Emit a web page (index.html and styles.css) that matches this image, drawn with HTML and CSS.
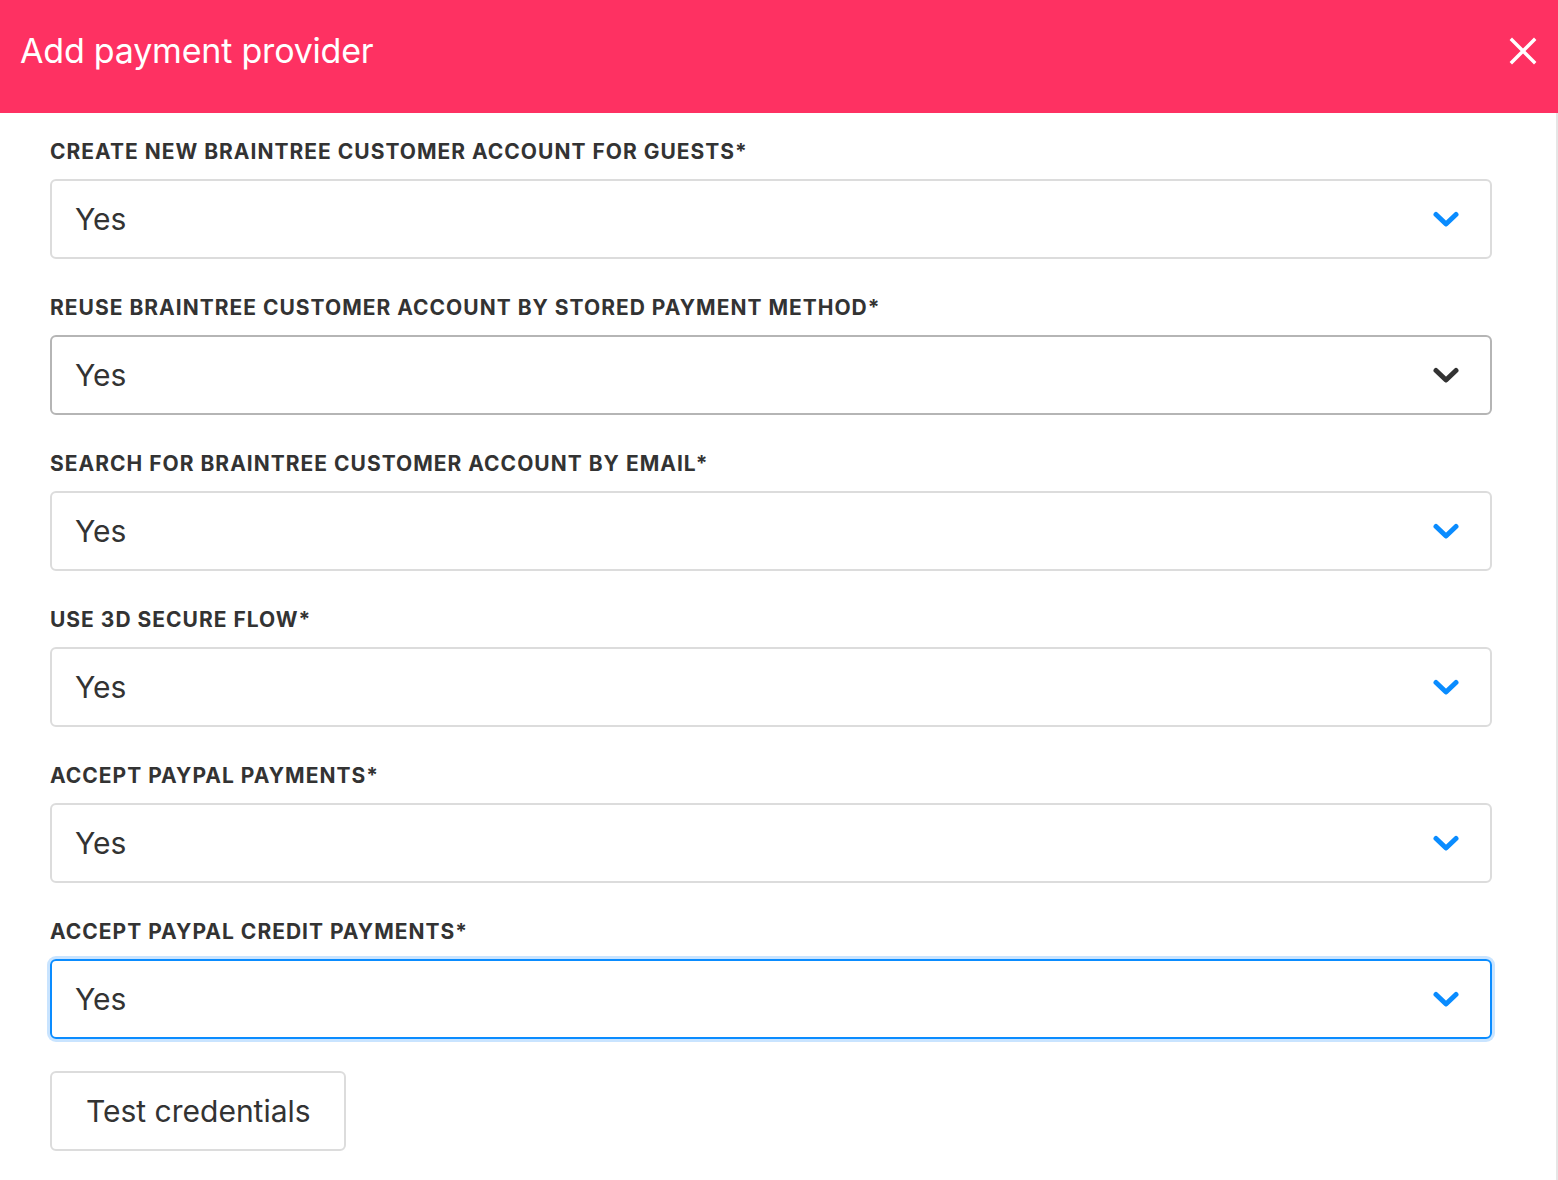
FILE: index.html
```html
<!DOCTYPE html>
<html lang="en">
<head>
  <meta charset="UTF-8">
  <title>Add payment provider</title>
  <link rel="stylesheet" href="styles.css">
</head>
<body>
  <div class="header">
    <span class="title">Add payment provider</span>
    <button class="close" aria-label="Close">
      <svg width="28" height="28" viewBox="0 0 28 28"><path d="M3 3 L25 25 M25 3 L3 25" stroke="#fff" stroke-width="3.4" stroke-linecap="square"/></svg>
    </button>
  </div>
  <div class="panel">
    <form class="provider-form">
      <div class="field">
        <label>Create new Braintree customer account for guests*</label>
        <div class="select">
          <span>Yes</span>
          <svg class="chevron" width="26" height="16" viewBox="0 0 26 16"><path d="M3 3.5 L13 13 L23 3.5"/></svg>
        </div>
      </div>
      <div class="field">
        <label>Reuse Braintree customer account by stored payment method*</label>
        <div class="select hover">
          <span>Yes</span>
          <svg class="chevron" width="26" height="16" viewBox="0 0 26 16"><path d="M3 3.5 L13 13 L23 3.5"/></svg>
        </div>
      </div>
      <div class="field">
        <label>Search for Braintree customer account by email*</label>
        <div class="select">
          <span>Yes</span>
          <svg class="chevron" width="26" height="16" viewBox="0 0 26 16"><path d="M3 3.5 L13 13 L23 3.5"/></svg>
        </div>
      </div>
      <div class="field">
        <label>Use 3D secure flow*</label>
        <div class="select">
          <span>Yes</span>
          <svg class="chevron" width="26" height="16" viewBox="0 0 26 16"><path d="M3 3.5 L13 13 L23 3.5"/></svg>
        </div>
      </div>
      <div class="field">
        <label>Accept PayPal payments*</label>
        <div class="select">
          <span>Yes</span>
          <svg class="chevron" width="26" height="16" viewBox="0 0 26 16"><path d="M3 3.5 L13 13 L23 3.5"/></svg>
        </div>
      </div>
      <div class="field">
        <label>Accept PayPal credit payments*</label>
        <div class="select focus">
          <span>Yes</span>
          <svg class="chevron" width="26" height="16" viewBox="0 0 26 16"><path d="M3 3.5 L13 13 L23 3.5"/></svg>
        </div>
      </div>
      <button type="button" class="test-btn">Test credentials</button>
    </form>
  </div>
</body>
</html>
```

FILE: styles.css
```css
html, body {
  margin: 0;
  background: #fff;
}
body {
  font-family: Inter, 'Noto Sans', sans-serif;
  color: #333;
}
.header {
  background: #fe3162;
  height: 113px;
  display: flex;
  align-items: center;
  justify-content: space-between;
  padding: 0 20px;
}
.title {
  color: #fff;
  font-size: 34px;
  font-weight: 400;
  letter-spacing: -0.2px;
  margin-top: -12px;
}
.close {
  background: none;
  border: none;
  padding: 0;
  width: 28px;
  height: 28px;
  margin-top: -12px;
  margin-right: 1px;
  cursor: pointer;
}
.panel {
  border-right: 2px solid #e6e6e6;
  min-height: 1067px;
}
.provider-form {
  padding: 27px 64px 0 50px;
}
.field { margin-bottom: 37px; }
.field:last-of-type { margin-bottom: 32px; }
label {
  display: block;
  font-size: 21px;
  line-height: 24px;
  font-weight: 700;
  text-transform: uppercase;
  letter-spacing: 1px;
  color: #333;
  margin-bottom: 15px;
}
.select {
  box-sizing: border-box;
  height: 80px;
  border: 2px solid #dcdcdc;
  border-radius: 6px;
  display: flex;
  align-items: center;
  justify-content: space-between;
  padding: 0 31px 0 23px;
  font-size: 30px;
  color: #333;
}
.select.hover { border-color: #b5b5b5; }
.select.focus {
  border-color: #0a8cff;
  box-shadow: 0 0 0 3px #c9e4ff;
}
.chevron path {
  fill: none;
  stroke: #0a8cff;
  stroke-width: 5;
  stroke-linecap: round;
  stroke-linejoin: round;
}
.select.hover .chevron path { stroke: #333; }
.test-btn {
  box-sizing: border-box;
  width: 296px;
  height: 80px;
  background: #fff;
  border: 2px solid #dcdcdc;
  border-radius: 6px;
  font-family: inherit;
  font-size: 30px;
  color: #333;
  text-align: left;
  padding: 0 0 0 34px;
  cursor: pointer;
}
```
